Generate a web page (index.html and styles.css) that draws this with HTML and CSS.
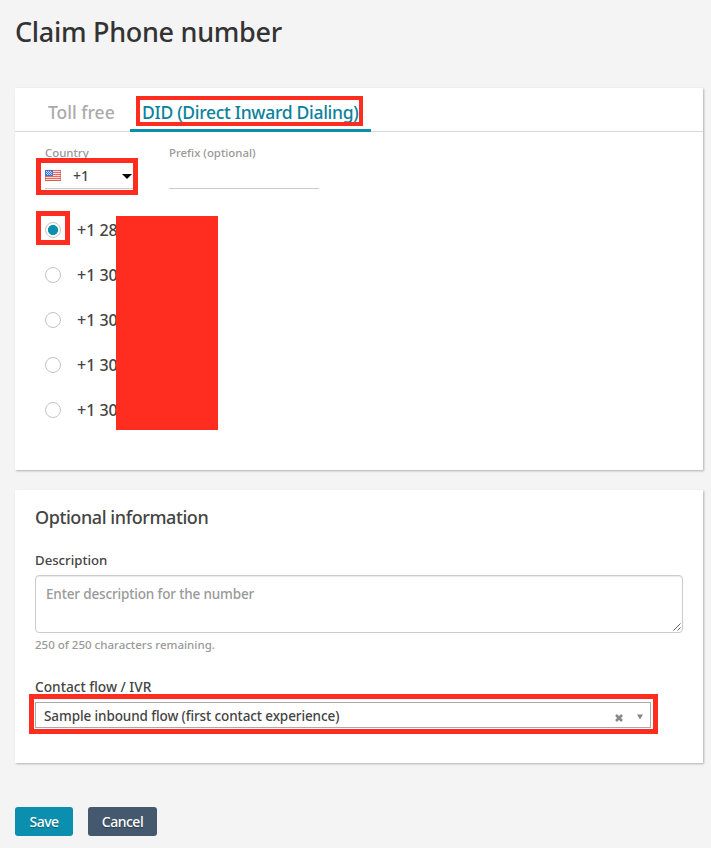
FILE: index.html
```html
<!DOCTYPE html>
<html lang="en">
<head>
<meta charset="utf-8">
<title>Claim Phone number</title>
<link rel="stylesheet" href="styles.css">
</head>
<body>
<h1><span>Claim Phone number</span></h1>
<section class="card numbers">
  <nav class="tabs">
    <a class="tab"><span>Toll free</span></a>
    <a class="tab active"><span>DID (Direct Inward Dialing)</span><i class="mark mark-tab"></i></a>
  </nav>
  <div class="filters">
    <div class="field country">
      <label><span>Country</span></label>
      <div class="control">
        <svg class="flag" width="16" height="11" viewBox="0 0 16 11" shape-rendering="crispEdges">
          <path fill="#fff" d="M0 0h16v11H0z"/>
          <path fill="#e8695f" d="M0 0h16v1H0zM8 2h8v1H8zM8 4h8v1H8zM0 6h16v1H0zM0 8h16v1H0zM0 10h16v1H0z"/>
          <path fill="#f4b5ac" d="M8 1h8v1H8zM8 3h8v1H8zM8 5h8v1H8zM0 7h16v1H0zM0 9h16v1H0z" opacity=".45"/>
          <path fill="#4274d8" d="M0 0h8v6H0z"/>
          <path fill="#c8d9ff" d="M1 1h1v1H1zM3 1h1v1H3zM5 1h1v1H5zM2 2h1v1H2zM4 2h1v1H4zM6 2h1v1H6zM1 3h1v1H1zM3 3h1v1H3zM5 3h1v1H5zM2 4h1v1H2zM4 4h1v1H4zM6 4h1v1H6z"/>
          <path fill="#c65a50" opacity=".6" d="M15 0h1v11h-1zM0 6h1v5H0zM0 10h16v1H0z"/>
        </svg>
        <span class="code">+1</span>
        <svg class="caret" width="10" height="5" viewBox="0 0 10 5"><path d="M0 0h10L5 5z"/></svg>
      </div>
      <i class="mark mark-country"></i>
    </div>
    <div class="field prefix">
      <label><span>Prefix (optional)</span></label>
      <div class="control"></div>
    </div>
  </div>
  <ul class="list">
    <li><i class="radio on"></i><span>+1 28</span><i class="mark mark-radio"></i></li>
    <li><i class="radio"></i><span>+1 30</span></li>
    <li><i class="radio"></i><span>+1 30</span></li>
    <li><i class="radio"></i><span>+1 30</span></li>
    <li><i class="radio"></i><span>+1 30</span></li>
    <li class="redaction"></li>
  </ul>
</section>
<section class="card info">
  <h2><span>Optional information</span></h2>
  <div class="label desc-label"><span>Description</span></div>
  <div class="textarea"><span>Enter description for the number</span>
    <svg class="grip" width="8" height="8" viewBox="0 0 8 8"><path d="M.5 7.5l7-7M4.5 7.5l3-3" stroke="#555" stroke-width=".9" fill="none"/></svg>
  </div>
  <div class="remaining"><span>250 of 250 characters remaining.</span></div>
  <div class="label flow-label"><span>Contact flow / IVR</span></div>
  <div class="select">
    <span>Sample inbound flow (first contact experience)</span>
    <svg class="clear" width="8" height="8" viewBox="0 0 8 8"><path d="M1 1l6 6M7 1L1 7" stroke="#888" stroke-width="2.5"/></svg>
    <svg class="down" width="6" height="6" viewBox="0 0 6 6"><path d="M0 .5h6l-3 5z" fill="#888"/></svg>
    <i class="mark mark-select"></i>
  </div>
</section>
<div class="actions">
  <button class="save"><span>Save</span></button>
  <button class="cancel"><span>Cancel</span></button>
</div>
</body>
</html>
```
FILE: styles.css
```css
* { box-sizing: border-box; }
body {
  margin: 0;
  padding: 0 8px 0 15px;
  height: 848px;
  overflow: hidden;
  background: #f4f4f4;
  color: #444;
  font-family: "Noto Sans", "Open Sans", sans-serif;
  font-weight: 500;
}
span { white-space: nowrap; }
h1 {
  margin: 0;
  height: 88px;
  padding-top: 12px;
  font-size: 27px;
  line-height: 40px;
  font-weight: 500;
  letter-spacing: -.3px;
  color: #333;
}
.card {
  background: #fff;
  width: 688px;
  box-shadow: 1px 1px 2px rgba(0, 0, 0, .28);
}
.numbers { height: 382px; }
.tabs {
  display: flex;
  height: 44px;
  padding-left: 21px;
  border-bottom: 1px solid #d8d8d8;
}
.tab {
  position: relative;
  height: 44px;
  padding: 10px 12px 0;
  font-size: 17.5px;
  line-height: 28px;
  color: #aaa;
  width: 94px;
}
.tab.active {
  width: 241px;
  color: #0a829c;
  letter-spacing: -.29px;
  border-bottom: 3px solid #0a8fae;
}
.mark {
  position: absolute;
  border: 5px solid #ff2d20;
}
.mark-tab { left: 6px; top: 8px; width: 227px; height: 30px; border-width: 4px; }
.filters {
  display: flex;
  gap: 36px;
  padding: 12px 0 0 30px;
}
.field { position: relative; }
.field label {
  display: block;
  height: 18px;
  font-size: 11.4px;
  line-height: 18px;
  color: #999;
}
.control {
  display: flex;
  align-items: center;
  height: 27px;
  border-bottom: 1px solid #ccc;
}
.country { width: 88px; }
.prefix { width: 150px; }
.flag { flex: none; }
.code { margin-left: 12px; font-size: 14px; }
.caret { margin-left: auto; margin-right: 1px; margin-top: 3px; }
.mark-country { left: -9px; top: 14px; width: 102px; height: 37px; }
.list {
  position: relative;
  list-style: none;
  margin: 0;
  padding: 18px 0 0 30px;
}
.list li {
  position: relative;
  display: flex;
  align-items: center;
  gap: 16px;
  height: 45px;
  font-size: 16px;
}
.list .radio {
  width: 16px;
  height: 16px;
  border: 1px solid #c4c4c4;
  border-radius: 50%;
  background: #fff;
}
.list .radio.on {
  background: radial-gradient(circle, #0a8fae 4.7px, #fff 5.4px);
}
.mark-radio { left: -9px; top: 4px; width: 34px; height: 34px; }
.list .redaction {
  position: absolute;
  left: 101px;
  top: 27px;
  width: 102px;
  height: 214px;
  background: #ff2d20;
}
.info {
  height: 273px;
  margin-top: 20px;
  padding: 13px 20px 0;
}
h2 {
  margin: 0;
  height: 47px;
  font-size: 18px;
  line-height: 28px;
  font-weight: 500;
  letter-spacing: -.42px;
}
.label { font-size: 13px; line-height: 20px; }
.desc-label { height: 25px; font-size: 13.2px; }
.textarea {
  position: relative;
  height: 58px;
  padding: 8px 10px;
  border: 1px solid #ccc;
  border-radius: 4px;
  box-shadow: inset 0 1px 1px rgba(0, 0, 0, .08);
  font-size: 13.5px;
  line-height: 20px;
  letter-spacing: -.15px;
  color: #999;
}
.grip { position: absolute; right: 1px; bottom: 1px; }
.remaining {
  margin-top: 4px;
  height: 40px;
  font-size: 11.5px;
  line-height: 16px;
  color: #999;
}
.flow-label { height: 25px; font-size: 13.7px; }
.select {
  position: relative;
  display: flex;
  align-items: center;
  width: 616px;
  height: 26px;
  padding: 0 7px 0 8px;
  border: 1px solid #aaa;
  font-size: 13.5px;
  letter-spacing: -.1px;
}
.select span { padding-top: 2px; }
.clear { margin: 5px 14px 0 auto; }
.down { margin-top: 3px; }
.mark-select { left: -7px; top: -9px; width: 629px; height: 40px; }
.actions {
  display: flex;
  gap: 15px;
  margin-top: 44px;
}
button {
  height: 29px;
  padding: 0;
  border: 0;
  border-radius: 3px;
  color: #fff;
  font: 500 14px/29px "Noto Sans", "Open Sans", sans-serif;
  letter-spacing: -.5px;
  text-shadow: 0 1px 1px rgba(0, 0, 0, .35);
}
.save { width: 58px; background: #0a8fae; }
.cancel { width: 69px; background: #44586e; }
```
